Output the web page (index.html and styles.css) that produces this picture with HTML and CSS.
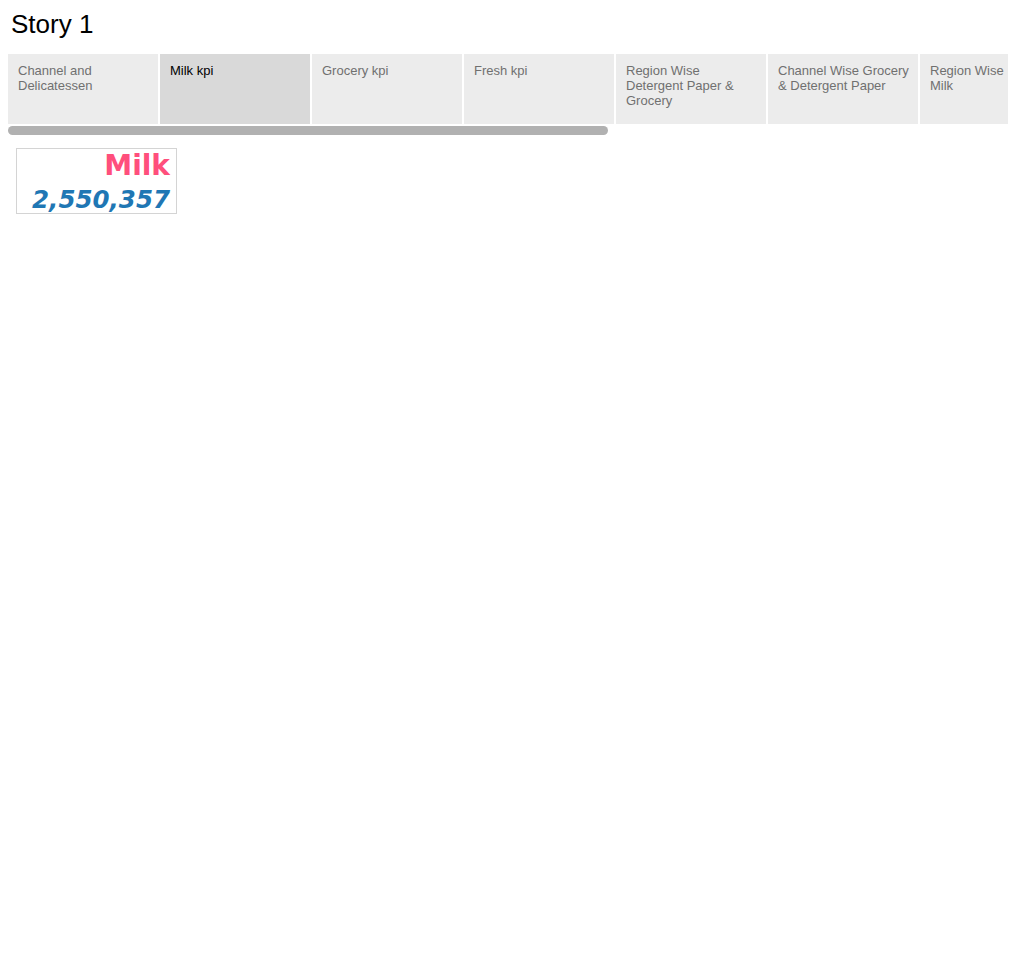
FILE: index.html
```html
<!DOCTYPE html>
<html>
<head>
<meta charset="utf-8">
<link rel="stylesheet" href="styles.css">
</head>
<body>
<div class="story">
  <h1 class="story-title">Story 1</h1>
  <div class="navigator">
    <div class="tabs">
      <div class="tab">Channel and Delicatessen</div>
      <div class="tab active">Milk kpi</div>
      <div class="tab">Grocery kpi</div>
      <div class="tab">Fresh kpi</div>
      <div class="tab">Region Wise Detergent Paper &amp; Grocery</div>
      <div class="tab">Channel Wise Grocery &amp; Detergent Paper</div>
      <div class="tab tab-last">Region Wise Milk</div>
    </div>
    <div class="scrollbar"><div class="thumb"></div></div>
  </div>
  <div class="content">
    <div class="kpi">
      <div class="kpi-label">Milk</div>
      <div class="kpi-value">2,550,357</div>
    </div>
  </div>
</div>
</body>
</html>
```

FILE: styles.css
```css
html, body {
  margin: 0;
  padding: 0;
  background: #ffffff;
}
body {
  font-family: "Liberation Sans", Arial, sans-serif;
}
.story {
  padding: 0 8px;
}
.story-title {
  margin: 0;
  padding: 8px 0 0 3px;
  height: 54px;
  box-sizing: border-box;
  font-size: 26px;
  font-weight: normal;
  line-height: 32px;
  color: #000;
}
.navigator {
  width: 1000px;
  overflow: hidden;
}
.tabs {
  display: flex;
  gap: 2px;
  height: 70px;
}
.tab {
  flex: 0 0 150px;
  box-sizing: border-box;
  background: #ececec;
  color: #707070;
  font-size: 13px;
  line-height: 15px;
  padding: 9px 8px 0 10px;
}
.tab.tab-last {
  flex: 0 0 88px;
  padding-right: 4px;
}
.tab.active {
  background: #d9d9d9;
  color: #000;
}
.scrollbar {
  height: 9px;
  margin-top: 2px;
}
.thumb {
  width: 600px;
  height: 9px;
  border-radius: 5px;
  background: #b1b1b1;
}
.content {
  padding: 13px 0 0 8px;
}
.kpi {
  width: 161px;
  height: 66px;
  box-sizing: border-box;
  border: 1px solid #d4d4d4;
  text-align: right;
  padding: 0 6px 0 0;
  font-family: "DejaVu Sans", Verdana, sans-serif;
  font-weight: bold;
}
.kpi-label {
  color: #ff4f7c;
  font-size: 28px;
  line-height: 32px;
  padding-top: 1px;
}
.kpi-value {
  color: #1f77b4;
  font-style: italic;
  font-size: 24.5px;
  line-height: 32px;
  padding-top: 2px;
}
```
